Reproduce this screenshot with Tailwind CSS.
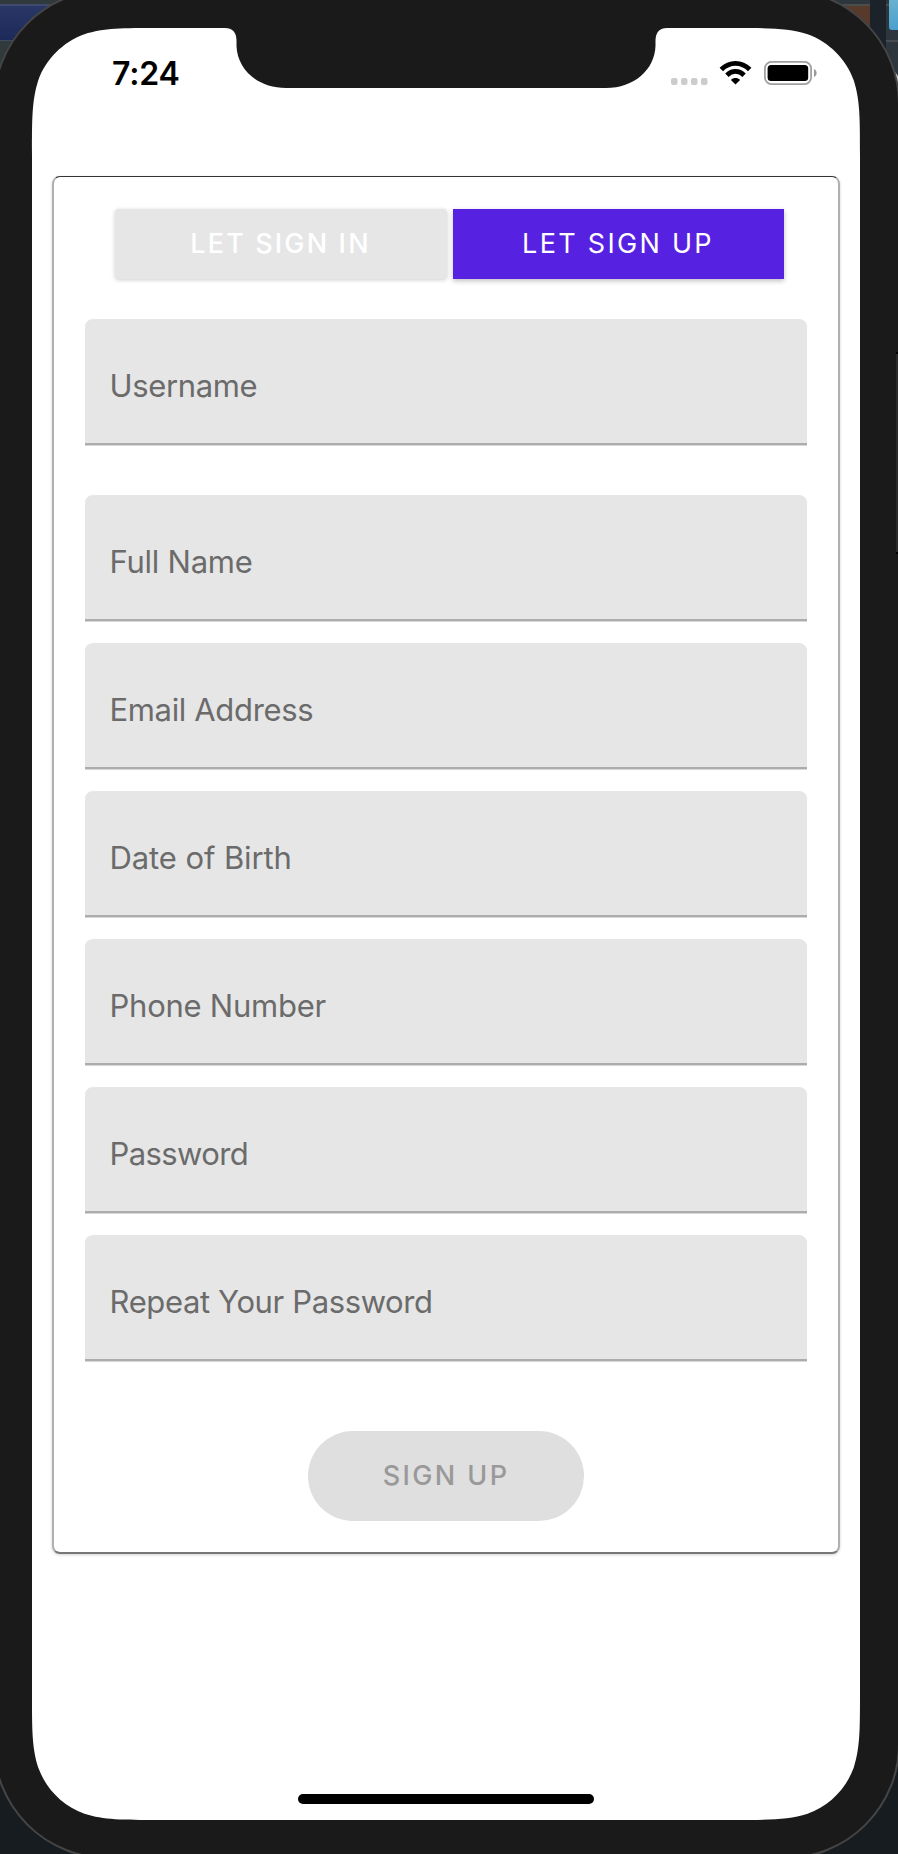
<!DOCTYPE html>
<html lang="en">
<head>
<meta charset="utf-8">
<title>Sign up</title>
<script src="https://cdn.jsdelivr.net/npm/@tailwindcss/browser@4"></script>
</head>
<body class="relative w-[898px] h-[1854px] overflow-hidden bg-[#171c20] font-['Inter','Liberation_Sans',sans-serif]">
<!-- desktop and phone frame -->
<svg class="absolute inset-0" width="898" height="1854" viewBox="0 0 898 1854" aria-hidden="true">
  <defs>
    <linearGradient id="blue" x1="0" y1="0" x2="0" y2="1"><stop offset="0" stop-color="#2a3867"/><stop offset="1" stop-color="#1d2a59"/></linearGradient>
    <linearGradient id="sky" x1="0" y1="0" x2="0" y2="1"><stop offset="0" stop-color="#6fb4d0"/><stop offset="1" stop-color="#4ba0cf"/></linearGradient>
  </defs>
  <rect width="449" height="90" fill="#30393c"/>
  <rect y="4" width="100" height="37" fill="url(#blue)"/>
  <rect y="4" width="100" height="2" fill="#3f4a6c"/>
  <rect y="40" width="100" height="1" fill="#404a5c"/>
  <rect x="780" width="118" height="100" fill="#2d363c"/>
  <rect x="780" y="4" width="90" height="37" fill="#573a2b"/>
  <rect x="780" y="4" width="118" height="2" fill="#4b4c4c"/>
  <rect x="870" width="16" height="100" fill="#1b2229"/>
  <rect x="886" y="40" width="12" height="2" fill="#454d52"/>
  <rect x="889" y="-6" width="16" height="36" rx="3" fill="url(#sky)"/>
  <path d="M893 69L898 76V88L896 84Z" fill="#c5c5c5"/>
  <rect x="-6" y="-10" width="905" height="1868" rx="114" fill="#1a1a1a" stroke="#454545" stroke-width="2"/>
  <rect x="896" y="353" width="2" height="200" fill="#2b2b2b"/>
  <rect x="896" y="352" width="2" height="2" fill="#000"/>
  <rect x="896" y="552" width="2" height="2" fill="#000"/>
  <path fill="#fff" d="M158.900 28H225Q236 28 236.500 40V46C237.500 70 258 88 286 88H606C634 88 654.500 70 655.500 46V40Q656 28 667 28H733.100C769.700 28 788 28 807.600 34.200C829.100 42 846 58.900 853.800 80.400C860 100 860 118.300 860 154.900V1693.100C860 1729.700 860 1748 853.800 1767.600C846 1789.100 829.100 1806 807.600 1813.800C788 1820 769.700 1820 733.100 1820H158.900C122.300 1820 104 1820 84.400 1813.800C62.900 1806 46 1789.100 38.200 1767.600C32 1748 32 1729.700 32 1693.100V154.900C32 118.300 32 100 38.200 80.400C46 58.900 62.900 42 84.400 34.200C104 28 122.300 28 158.900 28Z"/>
</svg>

<main class="relative ml-[32px] w-[828px] h-[1820px] flex flex-col">
  <header class="h-[176px] pt-[54px] pl-[80px] pr-[42px] flex justify-between items-start shrink-0">
    <time class="text-[32px] leading-[40px] font-semibold tracking-[-0.2px]">7:24</time>
    <svg class="mt-[6px]" width="148" height="28" viewBox="670 60 148 28" aria-label="Status">
      <g fill="#ccc"><rect x="671" y="78" width="6.500" height="7" rx="2"/><rect x="681" y="78" width="6.500" height="7" rx="2"/><rect x="691" y="78" width="6.500" height="7" rx="2"/><rect x="701" y="78" width="6.500" height="7" rx="2"/></g>
      <g fill="none" stroke="#000" stroke-width="4.800"><path d="M721.300 69.500C729.500 61.200 741.500 61.200 749.700 69.500"/><path d="M726.900 75.200C732 70.200 739 70.200 744.100 75.200"/></g>
      <path d="M735.500 84.500L730.900 79.900C733.500 77.400 737.500 77.400 740.100 79.900Z"/>
      <rect x="764.900" y="61.900" width="46.200" height="22.200" rx="6.500" fill="#fff" stroke="#a0a0a0" stroke-width="1.800"/>
      <rect x="767.600" y="65" width="40.600" height="16" rx="3.500"/>
      <path d="M814 69C817.500 70.500 817.500 75.500 814 77Z" fill="#999"/>
    </svg>
  </header>

  <section class="ml-[20px] w-[788px] h-[1378px] shrink-0 rounded-[8px] border-t border-x-2 border-b-2 border-t-[#333] border-x-[#b0b0b0] border-b-[#777] shadow-[0_1px_3px_rgba(0,0,0,0.18)] bg-white pt-[32px] px-[31px] flex flex-col items-center">
    <div class="w-[669px] h-[70px] ml-[6px] flex gap-[6px] text-[27px] tracking-[2.150px] font-medium text-white">
      <button class="w-[332px] rounded-[4px] bg-[#e6e6e6] shadow-[0_1px_4px_rgba(0,0,0,0.2)]">LET SIGN IN</button>
      <button class="w-[331px] bg-[#5721e2] font-normal tracking-[2.300px] shadow-[0_2px_5px_rgba(0,0,0,0.25)]">LET SIGN UP</button>
    </div>
    <form class="mt-[40px] w-[722px] flex flex-col gap-[22px] text-[31px] leading-[40px] text-[#6b6b6b]">
      <label class="h-[126px] mb-[28px] pt-[47px] pl-[24.5px] rounded-t-[8px] bg-[#e6e6e6] border-b-2 border-[#acacac] shadow-[0_1px_0_#d8d8d8] tracking-[-0.35px]">Username</label>
      <label class="h-[126px] pt-[47px] pl-[24.5px] rounded-t-[8px] bg-[#e6e6e6] border-b-2 border-[#acacac] shadow-[0_1px_0_#d8d8d8] tracking-[-0.25px]">Full Name</label>
      <label class="h-[126px] pt-[47px] pl-[24.5px] rounded-t-[8px] bg-[#e6e6e6] border-b-2 border-[#acacac] shadow-[0_1px_0_#d8d8d8] tracking-[-0.35px]">Email Address</label>
      <label class="h-[126px] pt-[47px] pl-[24.5px] rounded-t-[8px] bg-[#e6e6e6] border-b-2 border-[#acacac] shadow-[0_1px_0_#d8d8d8] tracking-[-0.1px]">Date of Birth</label>
      <label class="h-[126px] pt-[47px] pl-[24.5px] rounded-t-[8px] bg-[#e6e6e6] border-b-2 border-[#acacac] shadow-[0_1px_0_#d8d8d8] tracking-[-0.25px]">Phone Number</label>
      <label class="h-[126px] pt-[47px] pl-[24.5px] rounded-t-[8px] bg-[#e6e6e6] border-b-2 border-[#acacac] shadow-[0_1px_0_#d8d8d8] tracking-[-0.6px]">Password</label>
      <label class="h-[126px] pt-[47px] pl-[24.5px] rounded-t-[8px] bg-[#e6e6e6] border-b-2 border-[#acacac] shadow-[0_1px_0_#d8d8d8] tracking-[-0.37px]">Repeat Your Password</label>
    </form>
    <button class="mt-[70px] w-[276px] h-[90px] rounded-full bg-[#dfdfdf] text-[27px] tracking-[2.400px] font-medium text-[#999]">SIGN UP</button>
  </section>
  <div class="mt-auto mb-[16px] mx-auto w-[296px] h-[10px] rounded-full bg-black"></div>
</main>
</body>
</html>
